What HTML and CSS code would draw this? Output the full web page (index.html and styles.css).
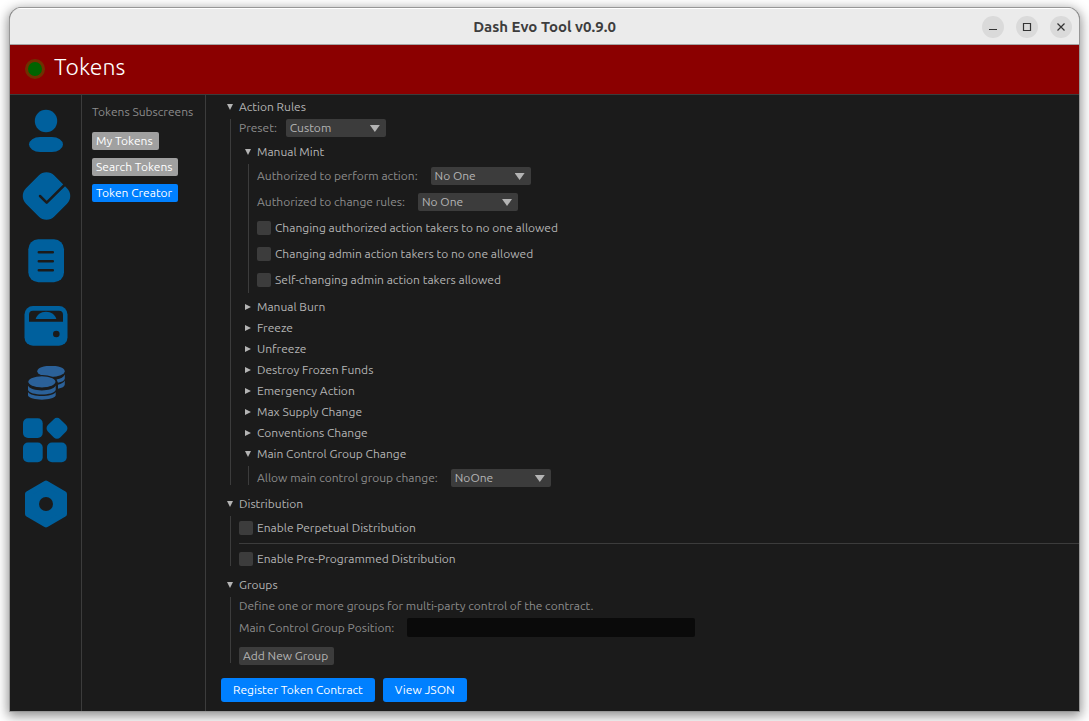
FILE: index.html
```html
<!DOCTYPE html>
<html lang="en">
<head>
<meta charset="utf-8">
<title>Dash Evo Tool v0.9.0</title>
<link rel="stylesheet" href="styles.css">
</head>
<body>
<div class="window">
  <header class="titlebar">
    <h1 class="window-title">Dash Evo Tool v0.9.0</h1>
    <div class="window-buttons">
      <button class="window-button" type="button" aria-label="Minimize"><svg viewBox="0 0 22 22"><path d="M7 13.500h8"/></svg></button>
      <button class="window-button" type="button" aria-label="Maximize"><svg viewBox="0 0 22 22"><path d="M7.500 7.500h7v7h-7z"/></svg></button>
      <button class="window-button" type="button" aria-label="Close"><svg viewBox="0 0 22 22"><path d="M7.500 7.500l7 7M14.500 7.500l-7 7"/></svg></button>
    </div>
  </header>
  <div class="banner">
    <span class="status-dot"></span>
    <h2 class="screen-title">Tokens</h2>
  </div>
  <div class="workspace">
    <nav class="sidebar" aria-label="Screens">
      <button class="nav-button" type="button" aria-label="Identities"><svg class="nav-icon" viewBox="0 0 50 50"><circle cx="25" cy="15" r="11.200"/><rect x="8" y="31" width="34" height="15" rx="11" ry="7.500"/></svg></button>
      <button class="nav-button" type="button" aria-label="Contracts"><svg class="nav-icon" viewBox="0 0 50 50"><rect x="5.500" y="5" width="40" height="40" rx="11" transform="rotate(45 25.500 25)"/><path class="cut" d="M19 25l6.700 6.700L46 11.500"/></svg></button>
      <button class="nav-button" type="button" aria-label="Documents"><svg class="nav-icon" viewBox="0 0 50 50"><rect x="7.300" y="3.300" width="35.700" height="43" rx="10"/><path class="cut" d="M17.800 16.200h14M17.800 25.200h14M17.800 34.200h14"/></svg></button>
      <button class="nav-button" type="button" aria-label="Wallets"><svg class="nav-icon" viewBox="0 0 50 50"><rect x="3.500" y="5" width="43" height="39.800" rx="8.500"/><path class="hole" d="M8 20.800v-7q0-4 4-4h26q4 0 4 4v7z"/><path d="M14.700 18c1-4 5-7.200 10.300-7.200S34.300 14 35.300 18z"/><circle class="hole" cx="35.300" cy="33" r="3.300"/></svg></button>
      <button class="nav-button" type="button" aria-label="Tokens"><svg class="nav-icon nav-icon-coins" viewBox="0 0 50 34"><path d="M43.800 8.500c-1 2.600-4 4.200-8.300 5l1.500 3.200c4-.7 6.500-2 6.800-4.200zM43.800 14.500c-1 2-3.500 3.500-6.800 4.200v4c4-.7 6.500-2 6.800-4.200z"/><ellipse cx="30" cy="5.300" rx="13.700" ry="5.600"/><path d="M7 19.500c3 6.500 24.700 6.500 27.700 0v4.500c-2 6-25.700 6-27.700 0zM7 26c3 5.300 24.700 5.300 27.700 0v3.500c-2 5.500-25.700 5.500-27.700 0z"/><ellipse class="coin-edge" cx="20.900" cy="15.800" rx="14.200" ry="6.200"/></svg></button>
      <button class="nav-button" type="button" aria-label="Tools"><svg class="nav-icon" viewBox="0 0 50 50"><rect x="2" y="3.300" width="19.700" height="19.700" rx="5"/><rect x="27.300" y="4.600" width="17.400" height="17.400" rx="4.500" transform="rotate(45 36 13.300)"/><rect x="2" y="27.600" width="19.700" height="19.700" rx="5"/><rect x="26" y="27.600" width="19.700" height="19.700" rx="5"/></svg></button>
      <button class="nav-button" type="button" aria-label="Network"><svg class="nav-icon" viewBox="0 0 50 50"><path class="hexagon" d="M25 3.500L43 14v20L25 44.500 7 34V14z"/><circle class="hole" cx="25" cy="24" r="7"/></svg></button>
    </nav>
    <aside class="subscreens">
      <p class="subscreens-title">Tokens Subscreens</p>
      <button class="subscreen" type="button">My Tokens</button>
      <button class="subscreen" type="button">Search Tokens</button>
      <button class="subscreen subscreen-active" type="button">Token Creator</button>
    </aside>
    <main class="content">
      <details class="section" open>
        <summary class="heading">Action Rules</summary>
        <div class="section-body">
          <div class="row row-compact">
            <label for="preset">Preset:</label>
            <span class="dropdown"><select id="preset"><option>Custom</option></select></span>
          </div>
          <div class="rules">
            <details class="rule rule-spaced" open>
              <summary class="heading">Manual Mint</summary>
              <div class="section-body rule-body">
                <div class="row">
                  <label for="mint-perform">Authorized to perform action:</label>
                  <span class="dropdown"><select id="mint-perform"><option>No One</option></select></span>
                </div>
                <div class="row">
                  <label for="mint-change">Authorized to change rules:</label>
                  <span class="dropdown"><select id="mint-change"><option>No One</option></select></span>
                </div>
                <label class="check"><input type="checkbox">Changing authorized action takers to no one allowed</label>
                <label class="check"><input type="checkbox">Changing admin action takers to no one allowed</label>
                <label class="check"><input type="checkbox">Self-changing admin action takers allowed</label>
              </div>
            </details>
            <details class="rule"><summary class="heading">Manual Burn</summary></details>
            <details class="rule"><summary class="heading">Freeze</summary></details>
            <details class="rule"><summary class="heading">Unfreeze</summary></details>
            <details class="rule"><summary class="heading">Destroy Frozen Funds</summary></details>
            <details class="rule"><summary class="heading">Emergency Action</summary></details>
            <details class="rule"><summary class="heading">Max Supply Change</summary></details>
            <details class="rule"><summary class="heading">Conventions Change</summary></details>
            <details class="rule" open>
              <summary class="heading">Main Control Group Change</summary>
              <div class="section-body padded-body">
                <div class="row last-line">
                  <label for="group-change">Allow main control group change:</label>
                  <span class="dropdown"><select id="group-change"><option>NoOne</option></select></span>
                </div>
              </div>
            </details>
          </div>
        </div>
      </details>
      <details class="section" open>
        <summary class="heading">Distribution</summary>
        <div class="section-body padded-body">
          <label class="check"><input type="checkbox">Enable Perpetual Distribution</label>
          <hr class="divider">
          <label class="check last-line"><input type="checkbox">Enable Pre-Programmed Distribution</label>
        </div>
      </details>
      <details class="section" open>
        <summary class="heading">Groups</summary>
        <div class="section-body groups-body">
          <p class="note">Define one or more groups for multi-party control of the contract.</p>
          <div class="row">
            <label for="group-position">Main Control Group Position:</label>
            <input class="text-field" id="group-position" type="text">
          </div>
          <button class="add-button last-line" type="button">Add New Group</button>
        </div>
      </details>
      <div class="actions">
        <button class="action-button" type="button">Register Token Contract</button>
        <button class="action-button" type="button">View JSON</button>
      </div>
    </main>
  </div>
</div>
</body>
</html>
```
FILE: styles.css
```css
* {
  box-sizing: border-box;
}

body {
  margin: 0;
  min-height: 100vh;
  padding: 7px 9px 9px;
  display: flex;
  background: #ffffff;
  color: #8c8c8c;
  font: 12px/18px "Ubuntu", "Noto Sans", sans-serif;
}

button,
select,
input {
  margin: 0;
  padding: 0;
  border: 0;
  font: inherit;
  color: inherit;
}

h1,
h2,
p {
  margin: 0;
}

.window {
  flex: 1;
  display: flex;
  flex-direction: column;
  overflow: hidden;
  border: 1px solid #979797;
  border-radius: 12px 12px 0 0;
  background: #1b1b1b;
  box-shadow: 0 3px 12px 1px rgba(0, 0, 0, 0.45);
}

.titlebar {
  height: 37px;
  display: grid;
  grid-template-columns: 1fr auto 1fr;
  align-items: center;
  padding: 0 7px;
  background: #ebebeb;
  border-top: 1px solid #ffffff;
  border-bottom: 1px solid #a5a5a5;
}

.window-title {
  grid-column: 2;
  color: #3d3d3d;
  font-size: 15px;
  font-weight: 700;
}

.window-buttons {
  display: flex;
  justify-content: flex-end;
  gap: 12px;
}

.window-button {
  width: 22px;
  height: 22px;
  border-radius: 50%;
  background: #dadada;
}

.window-button svg {
  display: block;
  fill: none;
  stroke: #333333;
  stroke-width: 1.2;
}

.banner {
  height: 50px;
  display: flex;
  align-items: center;
  gap: 9px;
  padding: 0 15px 2px;
  background: #8b0000;
  border-bottom: 1px solid #3c3c3c;
}

.status-dot {
  width: 20px;
  height: 20px;
  border: 3px solid #703000;
  border-radius: 50%;
  background: #006400;
}

.screen-title {
  padding-bottom: 4px;
  color: #ffffff;
  font-size: 23px;
  font-weight: 300;
  line-height: 26px;
}

.workspace {
  flex: 1;
  display: flex;
}

.sidebar {
  width: 72px;
  display: flex;
  flex-direction: column;
  align-items: center;
  gap: 15px;
  padding-top: 11px;
  border-right: 1px solid #3c3c3c;
}

.nav-button {
  background: none;
}

.nav-icon {
  display: block;
  width: 50px;
  height: 50px;
  fill: #00609d;
}

.nav-icon-coins {
  height: 34px;
  fill: #2b6199;
}

.nav-icon .cut {
  fill: none;
  stroke: #1b1b1b;
  stroke-width: 2.5;
  stroke-linecap: round;
  stroke-linejoin: round;
}

.nav-icon .hole {
  fill: #1b1b1b;
}

.nav-icon .hexagon {
  stroke: #00609d;
  stroke-width: 6;
  stroke-linejoin: round;
}

.nav-icon .coin-edge {
  stroke: #1b1b1b;
  stroke-width: 1.2;
}

.subscreens {
  width: 124px;
  display: flex;
  flex-direction: column;
  align-items: flex-start;
  gap: 8px;
  padding: 8px 0 0 10px;
  border-right: 1px solid #3c3c3c;
  white-space: nowrap;
}

.subscreens-title {
  padding-bottom: 3px;
}

.subscreen {
  padding: 0 6px 0 4px;
  border-radius: 2px;
  background: #a0a0a0;
  color: #ffffff;
}

.subscreen-active {
  background: #0080ff;
}

.content {
  flex: 1;
  min-width: 0;
  padding: 3px 0 9px 15px;
}

.section {
  margin-bottom: 10px;
}

.heading {
  display: flex;
  align-items: center;
  color: #b4b4b4;
  list-style: none;
}

.heading::before {
  content: "";
  width: 6px;
  height: 6px;
  margin: 0 6px;
  background: #b4b4b4;
  clip-path: polygon(0 0, 100% 50%, 0 100%);
}

details[open] > .heading::before {
  clip-path: polygon(0 0, 100% 0, 50% 100%);
}

.section-body {
  display: flex;
  flex-direction: column;
  align-items: flex-start;
  gap: 6px;
  margin: 3px 0 0 9px;
  padding: 0 0 0 8px;
  border-left: 1px solid #3c3c3c;
}

.rules {
  display: flex;
  flex-direction: column;
  gap: 3px;
}

.rule-spaced {
  margin-bottom: 2px;
}

.rule-body {
  gap: 8px;
  padding: 3px 0 4px 8px;
}

.padded-body {
  padding-top: 3px;
}

.groups-body {
  gap: 3px;
}

/* The guide line stops just short of the last control. */
.last-line {
  margin-bottom: -2px;
}

.row {
  display: flex;
  align-items: center;
  gap: 13px;
}

.row-compact {
  gap: 9px;
}

.dropdown {
  position: relative;
  display: flex;
}

.dropdown select {
  appearance: none;
  width: 100px;
  height: 18px;
  padding: 0 4px;
  border-radius: 2px;
  background: #3c3c3c;
  color: #b4b4b4;
}

.dropdown::after {
  content: "";
  position: absolute;
  top: 6px;
  right: 6px;
  width: 10px;
  height: 7px;
  background: #b4b4b4;
  clip-path: polygon(0 0, 100% 0, 50% 100%);
  pointer-events: none;
}

.check {
  display: flex;
  align-items: center;
  gap: 4px;
  color: #b4b4b4;
}

.check input {
  appearance: none;
  width: 14px;
  height: 14px;
  border-radius: 2px;
  background: #3c3c3c;
}

.divider {
  align-self: stretch;
  margin: 0;
  border: 0;
  border-top: 1px solid #3c3c3c;
}

.text-field {
  width: 288px;
  height: 19px;
  padding: 0 4px;
  border-radius: 2px;
  background: #0a0a0a;
}

.add-button {
  margin-top: 7px;
  padding: 0 6px 0 4px;
  border-radius: 2px;
  background: #3c3c3c;
  color: #b4b4b4;
}

.actions {
  display: flex;
  gap: 8px;
  padding-top: 5px;
}

.action-button {
  padding: 3px 12px;
  border-radius: 3px;
  background: #0080ff;
  color: #ffffff;
}
```
